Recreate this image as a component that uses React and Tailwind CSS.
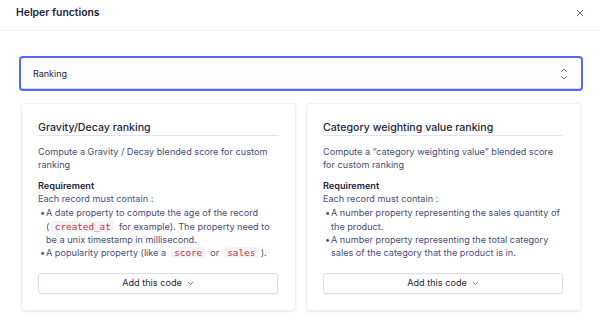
import React from "react";

const Code = ({ children }) => (
  <code className="mx-[2px] rounded-[3px] bg-[#f3f3f8] px-[3.5px] py-0 text-[9.3px] leading-[12px] text-[#c8323f] [font-family:'DejaVu_Sans_Mono',monospace]">
    {children}
  </code>
);

const Chevron = () => (
  <svg width="7" height="7" viewBox="0 0 10 10" className="ml-[5px] inline-block">
    <path d="M2 3.5 L5 6.5 L8 3.5" fill="none" stroke="#5a5e9a" strokeWidth="1.3" strokeLinecap="round" strokeLinejoin="round" />
  </svg>
);

const Card = ({ title, desc, items }) => (
  <div className="flex flex-col rounded-[4px] border border-[#efeff5] bg-white pl-4 pr-[17px] pt-[17px] pb-[16px] shadow-[0_1px_2px_rgba(35,38,59,0.1)]">
    <div className="border-b border-[#e3e3ee] pb-[1px] text-[10.6px] font-medium leading-[13px] text-[#23263b]">{title}</div>
    <p className="mt-[9px] text-[9.15px] leading-[13.3px] text-[#484c7a]">{desc}</p>
    <div className="mt-[8px] text-[9.15px] font-semibold leading-[12.5px] text-[#23263b]">Requirement</div>
    <div className="text-[9.15px] leading-[13.3px] text-[#484c7a]">Each record must contain :</div>
    <ul className="mt-[1px] text-[9.15px] leading-[13.3px] text-[#484c7a]">
      {items.map((it, i) => (
        <li key={i} className="flex">
          <span className="w-[8px] shrink-0 pl-[2px]">•</span>
          <span>{it}</span>
        </li>
      ))}
    </ul>
    <div className="flex-1" />
    <button className="mt-[13px] flex h-[21px] w-full items-center justify-center rounded-[3px] border border-[#dcdce8] bg-white text-[9.15px] text-[#23263b] shadow-[0_1px_1px_rgba(35,38,59,0.05)]">
      Add this code
      <Chevron />
    </button>
  </div>
);

export default function App() {
  return (
    <div className="h-[327px] w-[600px] overflow-hidden bg-white [font-family:Inter,'Noto_Sans',sans-serif]">
      <div className="flex h-[31px] items-center justify-between border-b border-[#f0f0f5] pb-[5px] pl-4 pr-[16px]">
        <div className="text-[10.4px] font-semibold text-[#23263b]">Helper functions</div>
        <svg width="8" height="8" viewBox="0 0 10 10">
          <path d="M1.5 1.5 L8.5 8.5 M8.5 1.5 L1.5 8.5" stroke="#5a5e9a" strokeWidth="1.2" strokeLinecap="round" />
        </svg>
      </div>
      <div className="pl-[19px] pr-[17px] pt-[25px]">
        <div className="flex h-[35px] items-center justify-between rounded-[4px] border-2 border-[#5468ff] bg-[#fdfdff] pl-[12px] pr-[13px] shadow-[inset_0_-1px_0_#d6d6e7]">
          <span className="text-[9px] text-[#23263b]">Ranking</span>
          <svg width="8" height="14" viewBox="0 0 8 14">
            <path d="M1.5 4.5 L4 2 L6.5 4.5 M1.5 9.5 L4 12 L6.5 9.5" fill="none" stroke="#5a5e9a" strokeWidth="1" strokeLinecap="round" strokeLinejoin="round" />
          </svg>
        </div>
        <div className="mt-[12px] grid grid-cols-2 gap-[10px] pl-[2px] pr-[2px]">
          <Card
            title="Gravity/Decay ranking"
            desc="Compute a Gravity / Decay blended score for custom ranking"
            items={[
              <>A date property to compute the age of the record (<Code>created_at</Code> for example). The property need to be a unix timestamp in millisecond.</>,
              <>A popularity property (like a <Code>score</Code> or <Code>sales</Code>).</>,
            ]}
          />
          <Card
            title="Category weighting value ranking"
            desc={"Compute a \u201Ccategory weighting value\u201D blended score for custom ranking"}
            items={[
              <>A number property representing the sales quantity of the product.</>,
              <>A number property representing the total category sales of the category that the product is in.</>,
            ]}
          />
        </div>
      </div>
    </div>
  );
}
